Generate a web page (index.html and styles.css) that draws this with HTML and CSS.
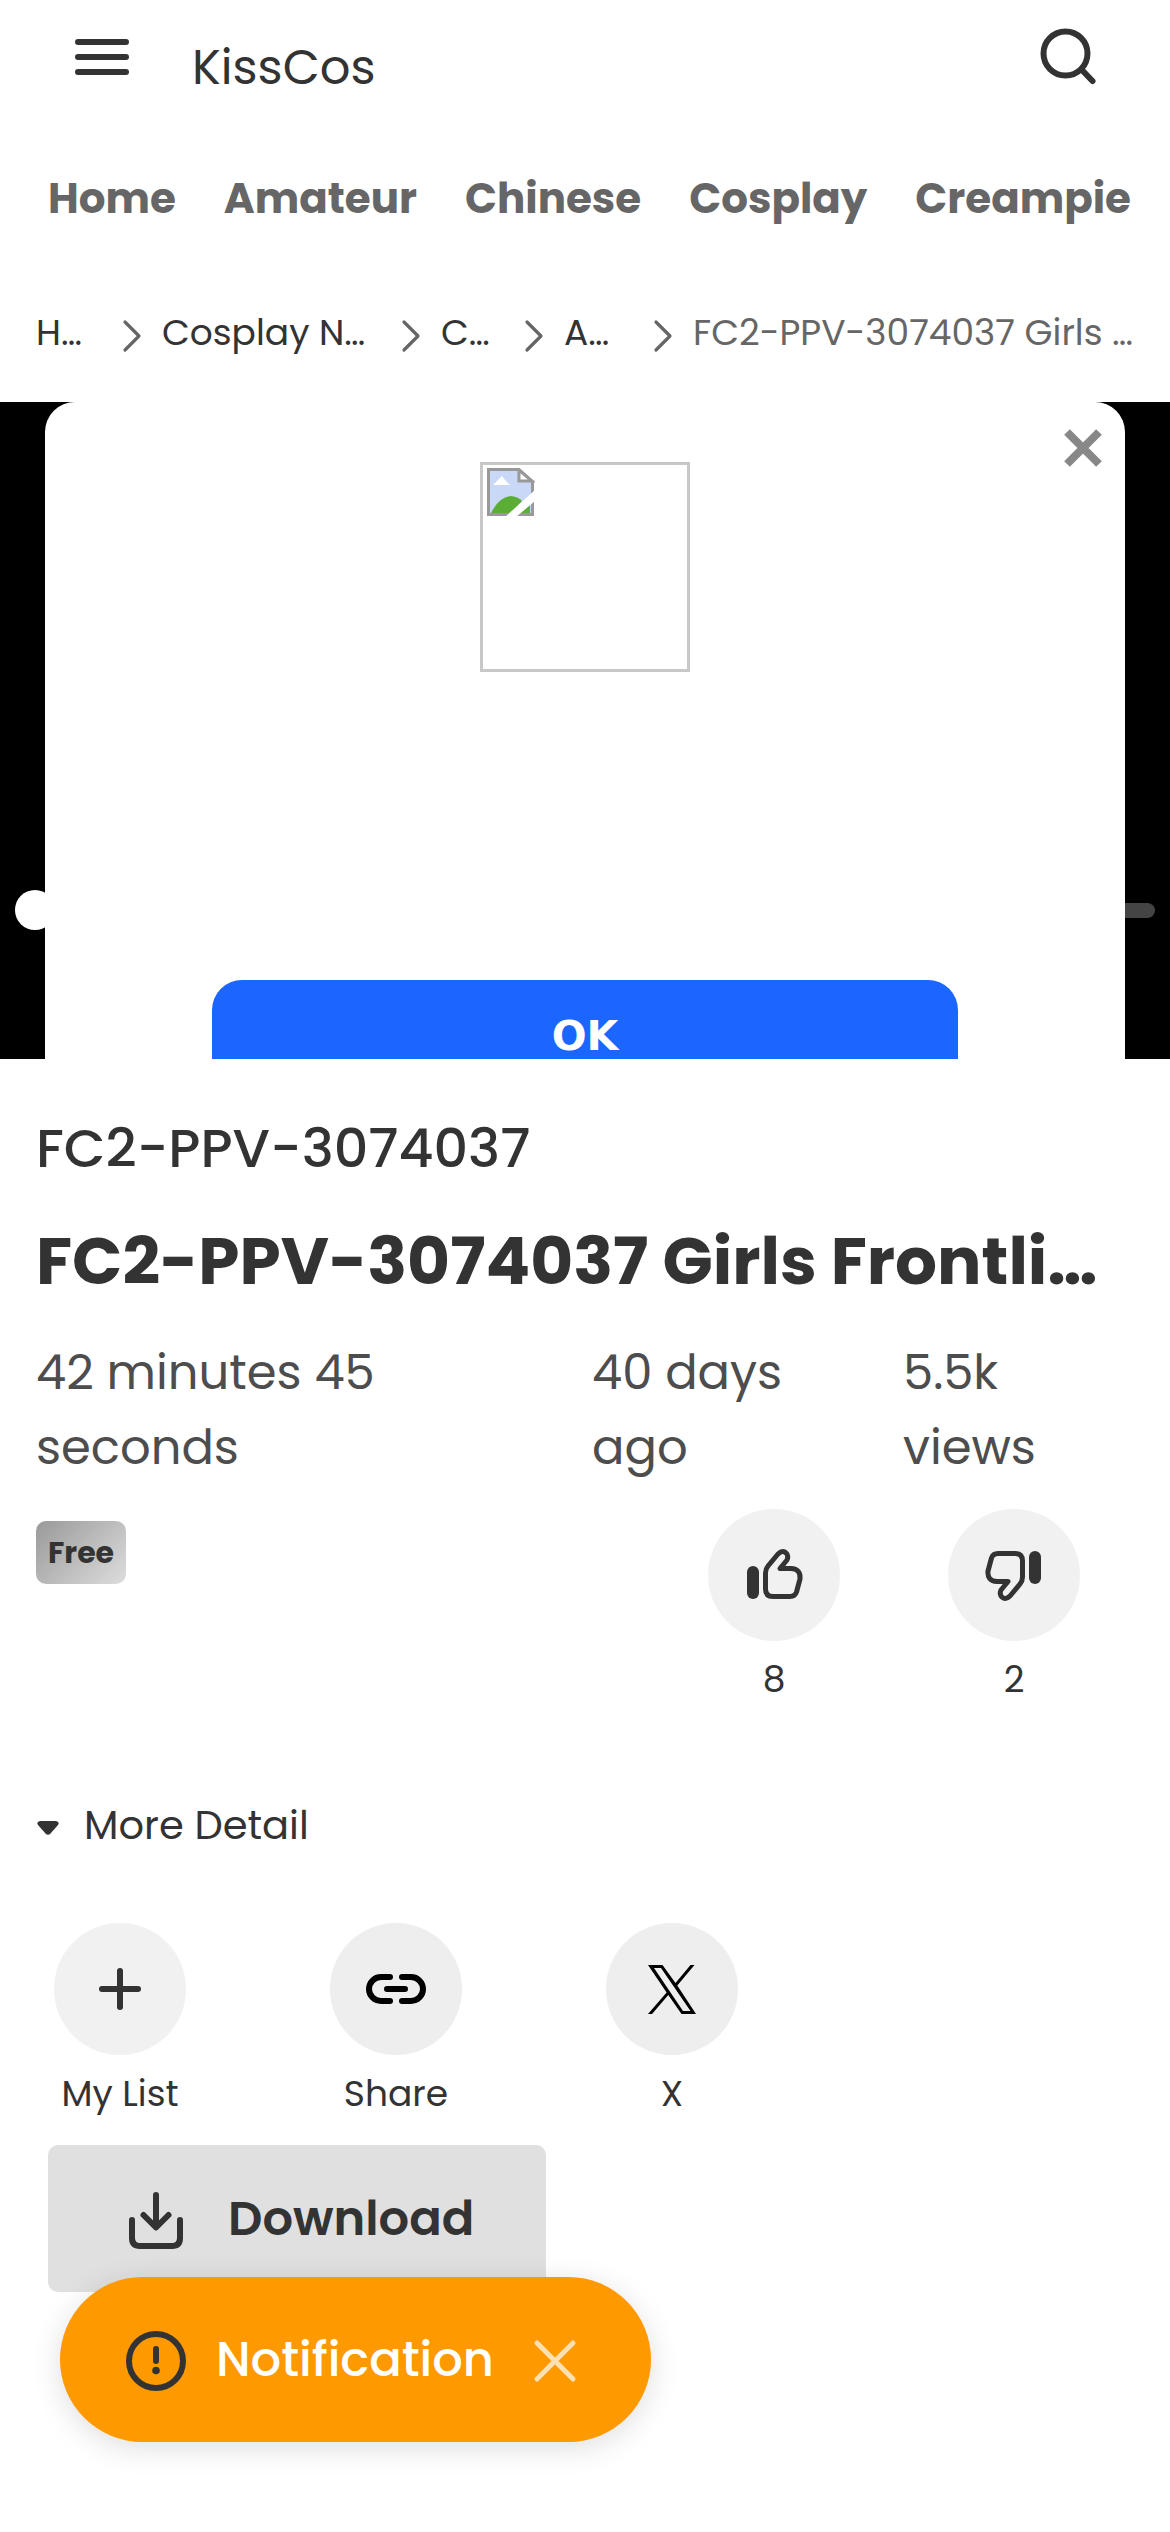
FILE: index.html
```
<!DOCTYPE html>
<html lang="en">
<head>
<meta charset="utf-8">
<title>KissCos</title>
<link rel="stylesheet" href="styles.css">
</head>
<body>
<header class="topbar">
  <svg class="menu" viewBox="0 0 60 60"><path d="M6 15H54M6 30H54M6 45H54"/></svg>
  <span class="brand t">KissCos</span>
  <svg class="search" viewBox="0 0 64 64"><circle cx="31.500" cy="28.500" r="22"/><path d="M48 45L58.500 56"/></svg>
</header>
<nav class="tabs">
  <span class="t">Home</span><span class="t">Amateur</span><span class="t">Chinese</span><span class="t">Cosplay</span><span class="t">Creampie</span>
</nav>
<div class="crumbs">
  <span class="t c1">H…</span><svg class="chev" viewBox="0 0 24 36"><path d="M5 4L19 18L5 32"/></svg>
  <span class="t c2">Cosplay N…</span><svg class="chev" viewBox="0 0 24 36"><path d="M5 4L19 18L5 32"/></svg>
  <span class="t c3">C…</span><svg class="chev" viewBox="0 0 24 36"><path d="M5 4L19 18L5 32"/></svg>
  <span class="t c4">A…</span><svg class="chev" viewBox="0 0 24 36"><path d="M5 4L19 18L5 32"/></svg>
  <span class="t c5">FC2-PPV-3074037 Girls …</span>
</div>
<section class="player">
  <div class="track"></div><div class="knob"></div>
  <div class="dialog">
    <svg class="close" viewBox="0 0 40 40"><path d="M4 4L36 36M36 4L4 36"/></svg>
    <div class="missing">
      <svg viewBox="0 0 48 48"><path d="M1.500 1.500H32L45.500 14V46.500H1.500Z" fill="#c8d8f6" stroke="#999" stroke-width="3"/><path d="M32 2V13H45Z" fill="#fff" stroke="#999" stroke-width="3"/><path d="M6 17L11 12L15 8L18 12L23 17Z" fill="#fff"/><path d="M4 45Q12 29 24 28Q32 29 35 33L24 45Z" fill="#5aad35"/><path d="M32 45L43 35V45Z" fill="#5aad35"/><path d="M18 49L48 22V33L29 49Z" fill="#fff"/></svg>
    </div>
    <div class="ok"><span class="t">OK</span></div>
  </div>
</section>
<main class="info">
  <div class="code"><span class="t">FC2-PPV-3074037</span></div>
  <h1><span class="t">FC2-PPV-3074037 Girls Frontli…</span></h1>
  <div class="meta">
    <p>42 minutes 45<br>seconds</p>
    <p>40 days<br>ago</p>
    <p>5.5k<br>views</p>
  </div>
  <div class="rate">
    <span class="badge"><span class="t">Free</span></span>
    <div class="act">
      <i><svg viewBox="0 0 132 132"><rect class="solid" x="39" y="57" width="12" height="33" rx="6"/><path d="M57.500 64Q57.500 60 60 57L70 45Q75 40 79 45Q80.500 48 79 51L72 59.500H83Q93 60 92 70L88.500 83Q87 87.500 82 87.500H65Q57.500 87.500 57.500 80Z"/></svg></i>
      <span class="t">8</span>
    </div>
    <div class="act">
      <i><svg viewBox="0 0 132 132"><g transform="rotate(180 66 66)"><rect class="solid" x="39" y="57" width="12" height="33" rx="6"/><path d="M57.500 64Q57.500 60 60 57L70 45Q75 40 79 45Q80.500 48 79 51L72 59.500H83Q93 60 92 70L88.500 83Q87 87.500 82 87.500H65Q57.500 87.500 57.500 80Z"/></g></svg></i>
      <span class="t">2</span>
    </div>
  </div>
  <div class="more"><svg viewBox="0 0 24 16"><path d="M4 1H20Q24 2 22 5L14.500 13.500Q12 16 9.500 13.500L2 5Q0 2 4 1Z"/></svg><span class="t">More Detail</span></div>
  <div class="tools">
    <div class="act"><i><svg viewBox="0 0 132 132"><path class="link" d="M66 48V84M48 66H84"/></svg></i><span class="t">My List</span></div>
    <div class="act dark"><i><svg viewBox="0 0 132 132"><path class="link" d="M60 54H51A12 12 0 0 0 51 78H60M72 54H81A12 12 0 0 1 81 78H72M57 66H75"/></svg></i><span class="t">Share</span></div>
    <div class="act dark"><i><svg viewBox="0 0 132 132"><path class="flat" fill-rule="evenodd" d="M42 42H56.500L69.500 60L84.500 42H88.500L71.300 62.500L90 91H75.500L62.300 72L46 91H42L60.600 69.500ZM48 45L77 88H84.500L55 45Z"/></svg></i><span class="t">X</span></div>
  </div>
  <div class="download"><svg viewBox="0 0 60 60"><path d="M30 6V36M17.500 26L30 38.500L42.500 26M6 31V49Q6 57 14 57H46Q54 57 54 49V31"/></svg><span class="t">Download</span></div>
</main>
<div class="notice">
  <svg class="alert" viewBox="0 0 60 60"><circle cx="30" cy="30" r="27"/><path d="M30 18V30"/><circle class="dot" cx="30" cy="39.500" r="3.800"/></svg>
  <span class="t">Notification</span>
  <svg class="x" viewBox="0 0 44 44"><path d="M4 4L40 40M40 4L4 40"/></svg>
</div>
</body>
</html>
```
FILE: styles.css
```
* { box-sizing: border-box; }
body { margin: 0; width: 1170px; height: 2532px; overflow: hidden; position: relative; background: #fff; color: #333; font-family: Poppins, Inter, sans-serif; }
svg { display: block; flex: none; fill: none; stroke: #333; stroke-width: 6; stroke-linecap: round; stroke-linejoin: round; }
.t { white-space: nowrap; flex: none; }
.topbar { height: 138px; display: flex; align-items: flex-start; padding: 24px 72px 0; }
.menu { width: 60px; height: 60px; margin-top: 3px; }
.brand { font-size: 48px; line-height: 60px; margin: 14px 0 0 60px; }
.search { width: 64px; height: 64px; margin: 1px 0 0 auto; }
.tabs { height: 120px; display: flex; gap: 48px; padding: 0 0 0 48px; align-items: center; font-size: 42px; font-weight: 700; color: #666; }
.crumbs { height: 144px; display: flex; align-items: center; padding: 4px 0 0 36px; font-size: 36px; }
.chev { width: 24px; height: 36px; stroke: #666; stroke-width: 3.2; margin: 8px 18px 0 0; }
.c1 { width: 84px; }
.c2 { width: 237px; }
.c3 { width: 81px; }
.c4 { width: 87px; }
.c5 { color: #666; }
.player { height: 657px; background: #000; position: relative; overflow: hidden; padding: 0 45px; }
.track { position: absolute; left: 15px; right: 15px; top: 501px; height: 15px; border-radius: 8px; background: #444; }
.knob { position: absolute; left: 15px; top: 488px; width: 40px; height: 40px; border-radius: 50%; background: #fff; }
.dialog { position: relative; height: 657px; overflow: hidden; background: #fff; border-radius: 30px 30px 0 0; padding-top: 60px; }
.close { position: absolute; right: 22px; top: 26px; width: 40px; height: 40px; stroke: #888; stroke-width: 8; stroke-linecap: butt; }
.missing { width: 210px; height: 210px; margin: 0 auto; border: 3px solid #c8c8c8; padding: 3px 4px; }
.missing svg { width: 48px; height: 48px; stroke: none; stroke-linejoin: miter; }
.ok { width: 746px; height: 80px; margin: 308px auto 0; border-radius: 30px 30px 0 0; background: #1b66ff; color: #fff; text-align: center; font: 700 41px/48px "DejaVu Sans", sans-serif; padding-top: 32px; }
.info { padding: 50px 36px 0; }
.code { font-size: 54px; font-weight: 500; line-height: 78px; }
h1 { margin: 25px 0 0; font-size: 66px; font-weight: 700; line-height: 99px; }
.meta { display: flex; height: 150px; margin-top: 24px; font-size: 48px; line-height: 75px; color: #4d4d4d; }
.meta p { margin: 0; width: 556px; flex: none; }
.meta p + p { width: 311px; }
.meta p + p + p { width: 200px; }
.rate { display: flex; margin-top: 24px; height: 240px; }
.badge { flex: none; width: 90px; height: 63px; margin: 12px 582px 0 0; border-radius: 10px; background: linear-gradient(135deg, #999, #ddd); text-align: center; font-size: 30px; font-weight: 700; line-height: 63px; }
.act { width: 132px; flex: none; display: flex; flex-direction: column; align-items: center; font-size: 36px; line-height: 54px; }
.act + .act { margin-left: 108px; }
.act i { width: 132px; height: 132px; border-radius: 50%; background: #f1f1f1; margin-bottom: 12px; }
.act svg { width: 132px; height: 132px; stroke-width: 5; }
.solid { fill: #333; stroke: none; }
.dark i { background: #eee; }
.dark svg { stroke: #000; }
.link { stroke-width: 6; }
.flat { fill: #000; stroke: none; }
.more { height: 60px; margin-top: 46px; display: flex; align-items: center; font-size: 40px; }
.more svg { width: 24px; height: 16px; fill: #333; stroke: none; margin: 6px 24px 0 0; }
.tools { display: flex; padding: 0 18px; height: 222px; margin-top: 68px; }
.tools .act + .act { margin-left: 144px; }
.download { width: 498px; height: 147px; margin-left: 12px; border-radius: 10px; background: #e0e0e0; display: flex; align-items: center; padding-left: 78px; font-size: 48px; font-weight: 600; }
.download svg { width: 60px; height: 60px; margin-right: 42px; }
.notice { position: absolute; left: 60px; top: 2277px; width: 591px; height: 165px; border-radius: 83px; background: #f90; box-shadow: 0 6px 30px rgba(0,0,0,.13); display: flex; align-items: center; padding: 3px 0 0 66px; color: #fff; font-size: 48px; font-weight: 500; }
.notice .t { margin-top: -3px; }
.alert { width: 60px; height: 60px; margin-right: 30px; }
.dot { fill: #333; stroke: none; }
.x { width: 44px; height: 44px; margin-left: auto; margin-right: 74px; stroke: #ffe0b0; stroke-width: 5; }
```
